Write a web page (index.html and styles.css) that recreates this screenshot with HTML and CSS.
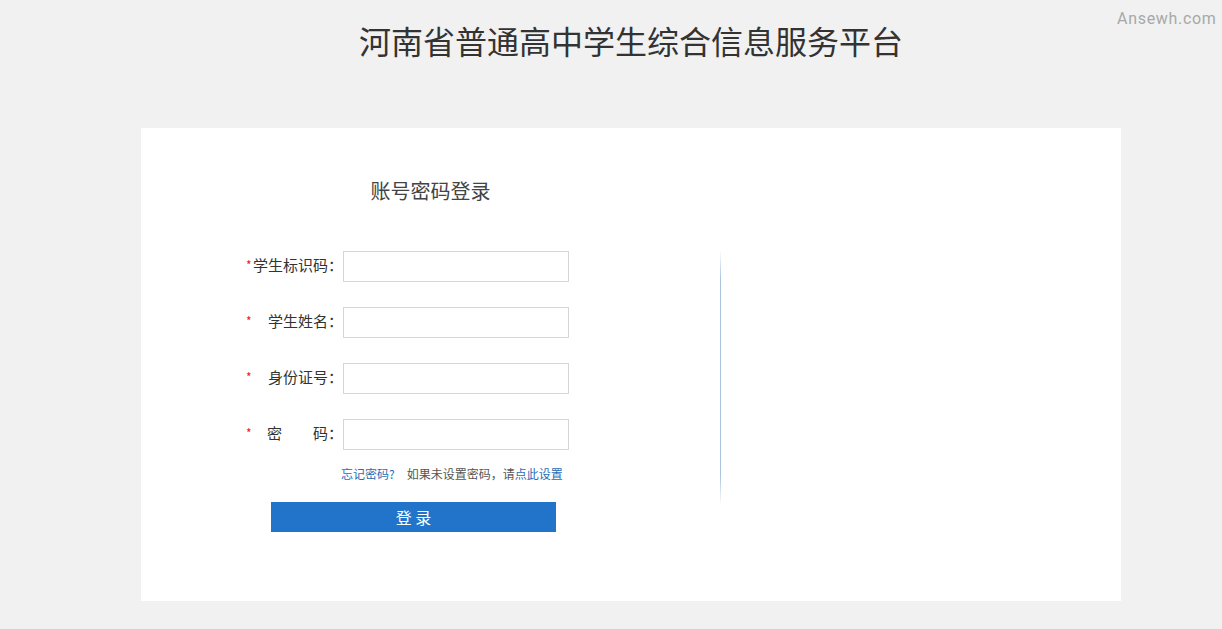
FILE: index.html
```html
<!DOCTYPE html>
<html lang="zh-CN">
<head>
<meta charset="utf-8">
<title>河南省普通高中学生综合信息服务平台</title>
<link rel="stylesheet" href="styles.css">
</head>
<body>
<div class="watermark">Ansewh.com</div>
<div class="page">
  <h1 class="site-title">河南省普通高中学生综合信息服务平台</h1>
  <div class="card">
    <div class="login-panel">
      <h2 class="login-title">账号密码登录</h2>
      <form class="login-form">
        <div class="row">
          <label class="label"><span class="star">*</span><span class="text">学生标识码<span class="colon">：</span></span></label>
          <input class="field" type="text">
        </div>
        <div class="row">
          <label class="label"><span class="star">*</span><span class="text">学生姓名<span class="colon">：</span></span></label>
          <input class="field" type="text">
        </div>
        <div class="row">
          <label class="label"><span class="star">*</span><span class="text">身份证号<span class="colon">：</span></span></label>
          <input class="field" type="text">
        </div>
        <div class="row">
          <label class="label"><span class="star">*</span><span class="text"><span class="gap">密</span>码<span class="colon">：</span></span></label>
          <input class="field" type="password">
        </div>
        <div class="links">
          <a class="link" href="#">忘记密码?</a>
          <span class="hint">如果未设置密码，请<a class="link" href="#">点此设置</a></span>
        </div>
        <button class="submit" type="button">登 录</button>
      </form>
    </div>
    <div class="divider"></div>
    <div class="side-panel"></div>
  </div>
</div>
</body>
</html>
```
FILE: styles.css
```css
* { box-sizing: border-box; }
html, body {
  margin: 0;
  padding: 0;
  background: #f1f1f1;
  font-family: "Noto Sans CJK SC", "Microsoft YaHei", sans-serif;
  color: #333;
}
.watermark {
  position: absolute;
  top: 8px;
  left: 1117px;
  font-family: Roboto, "Liberation Sans", sans-serif;
  font-size: 16px;
  letter-spacing: 0.7px;
  color: #a8a8a8;
  line-height: 22px;
}
.page {
  width: 980px;
  margin-left: 141px;
  padding-top: 20px;
}
.site-title {
  margin: 0;
  font-size: 32px;
  font-weight: normal;
  line-height: 40px;
  text-align: center;
  color: #333;
}
.card {
  margin-top: 68px;
  height: 473px;
  background: #fff;
  display: flex;
}
.login-panel {
  width: 579px;
  padding-top: 50px;
}
.login-title {
  margin: 0;
  font-size: 20px;
  font-weight: normal;
  line-height: 26px;
  text-align: center;
  color: #444;
}
.login-form {
  margin-top: 47px;
  display: flex;
  flex-direction: column;
}
.row {
  display: flex;
  align-items: center;
  height: 31px;
  margin-bottom: 25px;
  padding-left: 105px;
}
.row:nth-child(4) { margin-bottom: 16px; }
.label {
  width: 93px;
  margin-right: 4px;
  display: flex;
  justify-content: space-between;
  align-items: center;
  font-size: 15px;
  line-height: 20px;
  color: #333;
  margin-top: -3px;
}
.star {
  color: #e02020;
  font-size: 12px;
  width: 7px;
}
.text { white-space: nowrap; }
.colon { margin-right: -4px; }
.gap { margin-right: 31px; }
.field {
  width: 226px;
  height: 31px;
  border: 1px solid #d6d6d6;
  background: #fff;
  outline: none;
  padding: 0 6px;
}
.links {
  padding-left: 200px;
  font-size: 12px;
  line-height: 16px;
  display: flex;
  gap: 12px;
  white-space: nowrap;
}
.link {
  color: #2a6cb5;
  text-decoration: none;
}
.hint { color: #555; }
.submit {
  margin-top: 20px;
  margin-left: 130px;
  width: 285px;
  height: 30px;
  border: none;
  background: #2174c9;
  color: #fff;
  font-family: "Noto Sans CJK SC", sans-serif;
  font-size: 16px;
  padding: 0;
  cursor: pointer;
}
.divider {
  width: 1px;
  height: 255px;
  margin-top: 122px;
  background: linear-gradient(to bottom, rgba(160,190,225,0) 0%, #a9c2de 12%, #a9c2de 88%, rgba(160,190,225,0) 100%);
}
.side-panel { flex: 1; }
```
